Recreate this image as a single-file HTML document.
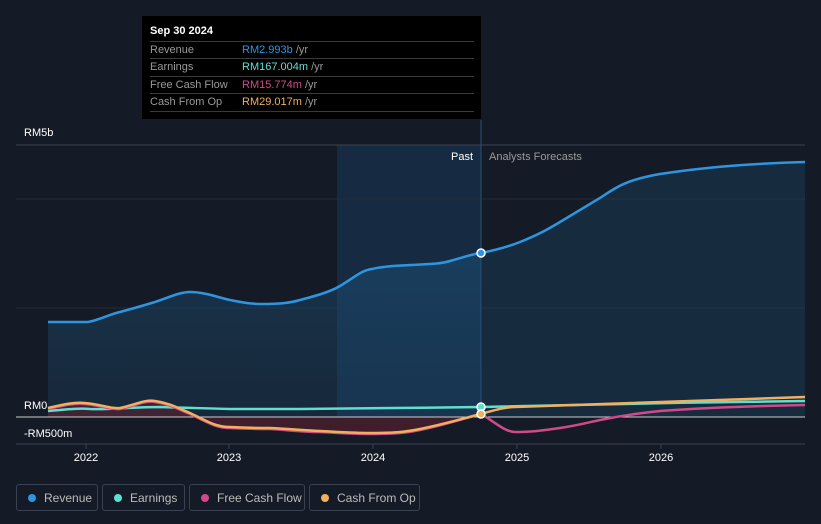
<!DOCTYPE html>
<html><head><meta charset="utf-8"><style>
body{margin:0;background:#151b26;width:821px;height:524px;overflow:hidden;font-family:"Liberation Sans",sans-serif}
svg{position:absolute;left:0;top:0}
.tip{position:absolute;left:142px;top:16px;width:339px;height:103px;background:#000;color:#fff;font-size:11px}
.tip .h{position:absolute;left:8px;top:9px;font-weight:bold}
.row{position:absolute;left:8px;width:324px;border-top:1px solid #3a3a3a;height:17px;line-height:17px;color:#999}
.row span{position:absolute;left:92px}
.leg{position:absolute;top:484px;height:27px;border:1px solid #3a4150;border-radius:3px;color:#bbb;font-size:12px;line-height:27px;box-sizing:border-box}
.leg i{position:absolute;left:11px;top:9px;width:8px;height:8px;border-radius:50%}
.leg b{font-weight:normal;position:absolute;left:27px}
</style></head><body>
<svg width="821" height="524">
<defs>
<linearGradient id="g" x1="0" y1="0" x2="0" y2="1"><stop offset="0" stop-color="#1e5a86" stop-opacity=".5"/><stop offset="1" stop-color="#1e5a86" stop-opacity=".2"/></linearGradient>
<clipPath id="cp"><rect x="0" y="0" width="481" height="524"/></clipPath>
<clipPath id="cf"><rect x="481" y="0" width="340" height="524"/></clipPath>
</defs>
<rect x="337" y="145" width="144" height="272" fill="#17304a" opacity=".8"/>
<line x1="16" y1="145" x2="805" y2="145" stroke="#3a4150"/>
<line x1="16" y1="199" x2="805" y2="199" stroke="#232b38"/>
<line x1="16" y1="308" x2="805" y2="308" stroke="#232b38"/>
<line x1="481" y1="120" x2="481" y2="417" stroke="#2a5070"/>
<g id="area">
<path clip-path="url(#cp)" d="M48,322 L88,322 C100,320 110,314 120,312 C135,308 145,305 155,302 C170,297 180,292 190,292 C205,292 220,298 230,300 C245,303 252,304 262,304 C280,304 290,303 300,300 C315,296 330,292 340,286 C355,277 362,270 372,269 C385,266 395,266 410,265 C430,264 440,264 450,261 C465,257 472,254 481,253 C500,249 510,246 520,242 C540,234 550,228 560,222 C580,210 590,204 600,198 C615,188 625,180 660,174 C700,168 740,164 805,162 L805,417 L48,417 Z" fill="url(#g)"/>
<path clip-path="url(#cf)" d="M48,322 L88,322 C100,320 110,314 120,312 C135,308 145,305 155,302 C170,297 180,292 190,292 C205,292 220,298 230,300 C245,303 252,304 262,304 C280,304 290,303 300,300 C315,296 330,292 340,286 C355,277 362,270 372,269 C385,266 395,266 410,265 C430,264 440,264 450,261 C465,257 472,254 481,253 C500,249 510,246 520,242 C540,234 550,228 560,222 C580,210 590,204 600,198 C615,188 625,180 660,174 C700,168 740,164 805,162 L805,417 L48,417 Z" fill="#1e4a6e" opacity=".35"/>
</g>
<path d="M48,409 L85,404 L120,409 L155,402 L190,414 L230,428 L270,429 L320,432 L370,434 L420,430 L481,414 L481,417 L48,417Z" fill="#6a2030" opacity=".5"/>
<path d="M48,322 L88,322 C100,320 110,314 120,312 C135,308 145,305 155,302 C170,297 180,292 190,292 C205,292 220,298 230,300 C245,303 252,304 262,304 C280,304 290,303 300,300 C315,296 330,292 340,286 C355,277 362,270 372,269 C385,266 395,266 410,265 C430,264 440,264 450,261 C465,257 472,254 481,253 C500,249 510,246 520,242 C540,234 550,228 560,222 C580,210 590,204 600,198 C615,188 625,180 660,174 C700,168 740,164 805,162" fill="none" stroke="#2e96e0" stroke-width="2.5"/>
<line x1="16" y1="417" x2="805" y2="417" stroke="#ccc"/>
<line x1="16" y1="444" x2="805" y2="444" stroke="#3a4150"/>
<g stroke="#3a4150"><line x1="86" y1="444" x2="86" y2="449"/><line x1="229" y1="444" x2="229" y2="449"/><line x1="373" y1="444" x2="373" y2="449"/><line x1="517" y1="444" x2="517" y2="449"/><line x1="661" y1="444" x2="661" y2="449"/></g>
<path d="M48,411 C70,409 80,408 90,409 C110,410 130,407 160,407 C185,408 200,408 230,409 L300,409 C350,408 420,408 481,407 C560,405 700,402 805,401" fill="none" stroke="#5ee0d0" stroke-width="2.5"/>
<path d="M48,409 C65,405 75,403 85,404 C100,405 110,410 120,409 C135,406 145,400 155,402 C170,404 180,410 190,414 C205,421 215,428 230,428 C250,429 260,429 270,429 C290,430 300,432 320,432 C340,433 355,434 370,434 C395,434 405,433 420,430 C445,425 465,418 481,414 C495,422 505,432 515,432 C535,432 545,430 560,428 C580,425 590,422 600,420 C620,416 640,413 660,411 C700,408 750,406 805,405" fill="none" stroke="#d04a8a" stroke-width="2.5"/>
<path d="M48,408 C65,404 75,402 85,403 C100,404 110,409 120,408 C135,405 145,399 155,401 C170,403 180,409 190,413 C205,420 215,427 230,427 C250,428 260,428 270,428 C290,429 300,430 320,431 C340,432 355,433 370,433 C395,433 405,432 420,429 C445,424 465,418 481,414 C495,410 505,407 515,407 C600,404 700,401 805,397" fill="none" stroke="#f0b060" stroke-width="2.5"/>
<circle cx="481" cy="253" r="4" fill="#2e96e0" stroke="#fff" stroke-width="1.5"/>
<circle cx="481" cy="407" r="4" fill="#5ee0d0" stroke="#fff" stroke-width="1.5"/>
<circle cx="481" cy="414" r="4" fill="#f0b060" stroke="#fff" stroke-width="1.5"/>
<g font-family="Liberation Sans,sans-serif" font-size="11" fill="#fff">
<text x="24" y="136">RM5b</text>
<text x="24" y="409">RM0</text>
<text x="24" y="437">-RM500m</text>
<text x="473" y="160" text-anchor="end">Past</text>
<text x="489" y="160" fill="#999">Analysts Forecasts</text>
<g text-anchor="middle"><text x="86" y="461">2022</text><text x="229" y="461">2023</text><text x="373" y="461">2024</text><text x="517" y="461">2025</text><text x="661" y="461">2026</text></g>
</g>
</svg>
<div class="tip"><div class="h">Sep 30 2024</div>
<div class="row" style="top:25px">Revenue<span style="color:#2e96e0">RM2.993b <em style="color:#999;font-style:normal">/yr</em></span></div>
<div class="row" style="top:42px">Earnings<span style="color:#5ee0d0">RM167.004m <em style="color:#999;font-style:normal">/yr</em></span></div>
<div class="row" style="top:60px">Free Cash Flow<span style="color:#d04a8a">RM15.774m <em style="color:#999;font-style:normal">/yr</em></span></div>
<div class="row" style="top:77px;border-bottom:1px solid #3a3a3a">Cash From Op<span style="color:#f0b060">RM29.017m <em style="color:#999;font-style:normal">/yr</em></span></div>
</div>
<div class="leg" style="left:16px;width:82px"><i style="background:#2e96e0"></i><b>Revenue</b></div>
<div class="leg" style="left:102px;width:83px"><i style="background:#5ee0d0"></i><b>Earnings</b></div>
<div class="leg" style="left:189px;width:116px"><i style="background:#d04a8a"></i><b>Free Cash Flow</b></div>
<div class="leg" style="left:309px;width:111px"><i style="background:#f0b060"></i><b>Cash From Op</b></div>
</body></html>
